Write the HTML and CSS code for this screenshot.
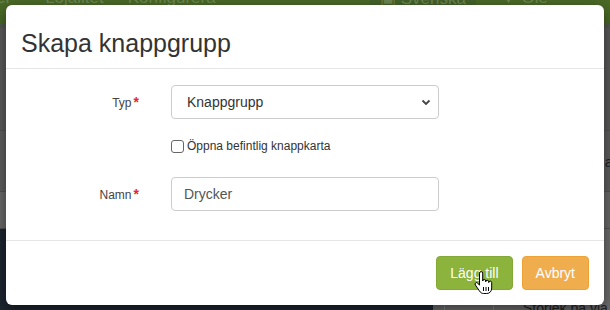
FILE: index.html
```html
<!DOCTYPE html>
<html>
  <head>
    <meta charset="utf-8" />
    <link rel="stylesheet" href="styles.css">
    <title>Skapa knappgrupp</title>
  </head>
  <body>
    <div class="page">
      <div class="topbar">
        <span class="nav-item nav-first">er</span>
        <span class="nav-item">Lojalitet</span>
        <span class="nav-item">Konfigurera</span>
        <span class="nav-spacer"></span>
        <span class="nav-item nav-lang">&#9635; Svenska</span>
        <span class="nav-item nav-user">&#9660; Ole</span>
      </div>
      <div class="content">
        <div class="content-row row-a"></div>
        <div class="content-row row-b"><span class="row-text">a</span></div>
        <div class="content-row row-c"></div>
      </div>
      <div class="bottom">
        <div class="bottom-dark"></div>
        <div class="bottom-stats">
          <span class="stat-box"></span>
          <span class="stat-text">Storlek på via</span>
        </div>
      </div>
    </div>

    <div class="modal">
      <div class="modal-header">
        <h4 class="modal-title">Skapa knappgrupp</h4>
      </div>
      <div class="modal-body">
        <div class="form-row">
          <label class="form-label">Typ<span class="req">*</span></label>
          <div class="select-wrap">
            <select class="form-control">
              <option>Knappgrupp</option>
            </select>
            <svg class="chevron" width="10" height="7" viewBox="0 0 10 7">
              <path d="M1.5 1.5 L5 5 L8.5 1.5" fill="none" stroke="#444" stroke-width="1.8" />
            </svg>
          </div>
        </div>
        <div class="form-row row-check">
          <span></span>
          <label class="check-label"><input type="checkbox" class="check" />Öppna befintlig knappkarta</label>
        </div>
        <div class="form-row row-name">
          <label class="form-label">Namn<span class="req">*</span></label>
          <input type="text" class="form-control input-name" value="Drycker" />
        </div>
      </div>
      <div class="modal-footer">
        <button class="btn btn-add">Lägg till</button>
        <button class="btn btn-cancel">Avbryt</button>
      </div>
    </div>

    <svg class="cursor" width="19" height="24" viewBox="0 0 19 24">
      <path d="M5.5 2.2 a1.6 1.6 0 0 1 3.2 0 V10 a1.5 1.5 0 0 1 3 0 v0.8 a1.5 1.5 0 0 1 3 0 v0.8 a1.5 1.5 0 0 1 3 0 V17 c0 3.4-2 5.5-5 5.5 H9.6 c-2 0-3.2-1-4.2-2.6 L1.4 14 a1.5 1.5 0 0 1 2.4-1.8 L5.5 14.2 Z" fill="#fff" stroke="#000" stroke-width="1" stroke-linejoin="round" />
      <path d="M9.5 16 v4 M12 16 v4 M14.5 16 v4" stroke="#000" stroke-width="1" />
    </svg>
  </body>
</html>
```

FILE: styles.css
```css
html,
body {
  margin: 0;
  width: 610px;
  height: 310px;
  overflow: hidden;
}
body {
  font-family: "Liberation Sans", Arial, sans-serif;
  background-color: #5c5c5c;
  position: relative;
}

/* page behind the dialog, already dimmed */
.page {
  display: flex;
  flex-direction: column;
  height: 310px;
}
.topbar {
  height: 24px;
  background-color: #4a6a26;
  border-bottom: 4px solid #555b50;
  display: flex;
  align-items: flex-start;
  overflow: hidden;
  font-size: 17px;
  color: #6d8752;
}
.nav-item {
  margin-top: -12px;
  margin-right: 24px;
}
.nav-first {
  margin-left: -4px;
  margin-right: 34px;
}
.nav-spacer {
  flex: 1;
}
.nav-lang {
  padding: 0 10px;
  background-color: #44622a;
}
.nav-user {
  margin-right: 0;
  width: 110px;
}
.content {
  height: 201px;
  display: flex;
  flex-direction: column;
}
.content-row {
  border-bottom: 1px solid #545454;
}
.row-a {
  height: 102px;
}
.row-b {
  height: 60px;
  background-color: #606060;
  display: flex;
  justify-content: flex-end;
  align-items: center;
}
.row-text {
  font-size: 15px;
  color: #222;
  margin-right: -3px;
}
.row-c {
  flex: 1;
  background-color: #6b6b6b;
}
.bottom {
  flex: 1;
  display: flex;
}
.bottom-dark {
  width: 433px;
  background-color: #1e2631;
}
.bottom-stats {
  flex: 1;
  background-color: #6e6e6e;
  display: flex;
  align-items: flex-end;
  gap: 29px;
  white-space: nowrap;
  overflow: hidden;
}
.stat-box {
  width: 48px;
  height: 10px;
  margin-left: 11px;
  flex-shrink: 0;
  border: 1px solid #888;
  border-bottom: 0;
  border-radius: 3px 3px 0 0;
}
.stat-text {
  font-size: 14px;
  color: #222;
  margin-bottom: -6px;
}

/* dialog */
.modal {
  position: absolute;
  top: 5px;
  left: 6px;
  width: 598px;
  height: 300px;
  background-color: #fff;
  border-radius: 6px;
  box-shadow: 0 5px 15px rgba(0, 0, 0, 0.5);
  display: flex;
  flex-direction: column;
}
.modal-header {
  height: 64px;
  box-sizing: border-box;
  padding: 24px 15px 0;
  border-bottom: 1px solid #e5e5e5;
}
.modal-title {
  margin: 0;
  font-size: 25px;
  line-height: 28px;
  font-weight: normal;
  color: #333;
}
.modal-body {
  padding: 16px 15px 29px;
  display: flex;
  flex-direction: column;
}
.form-row {
  display: grid;
  grid-template-columns: 118px 268px;
  column-gap: 32px;
  align-items: center;
}
.form-label {
  text-align: right;
  font-size: 12px;
  color: #444;
}
.req {
  color: #e4262d;
  font-weight: bold;
  font-size: 14px;
  margin-left: 2px;
}
.select-wrap {
  position: relative;
  display: flex;
}
.form-control {
  width: 268px;
  height: 34px;
  box-sizing: border-box;
  border: 1px solid #ccc;
  border-radius: 4px;
  background-color: #fff;
  font-family: "Liberation Sans", Arial, sans-serif;
  font-size: 14px;
  color: #333;
  padding: 0 12px;
  margin: 0;
}
select.form-control {
  appearance: none;
  padding-left: 15px;
}
.chevron {
  position: absolute;
  right: 8px;
  top: 14px;
}
.input-name {
  color: #555;
}
.row-check {
  margin-top: 18px;
  height: 18px;
}
.check-label {
  display: flex;
  align-items: center;
  font-size: 12px;
  color: #333;
}
.check {
  appearance: none;
  width: 13px;
  height: 13px;
  margin: 0 3px 0 0;
  border: 1px solid #666;
  border-radius: 3px;
  background-color: #fff;
}
.row-name {
  margin-top: 22px;
}
.modal-footer {
  border-top: 1px solid #e5e5e5;
  padding: 15px;
  display: flex;
  justify-content: flex-end;
  gap: 9px;
}
.btn {
  height: 34px;
  padding: 0 13px;
  border-radius: 4px;
  font-family: "Liberation Sans", Arial, sans-serif;
  font-size: 14px;
  color: #fff;
  border: 1px solid transparent;
}
.btn-add {
  background-color: #8cb33b;
  border-color: #82a836;
}
.btn-cancel {
  background-color: #f0ad4e;
  border-color: #eea236;
}
.cursor {
  position: absolute;
  left: 474px;
  top: 271px;
}
```
